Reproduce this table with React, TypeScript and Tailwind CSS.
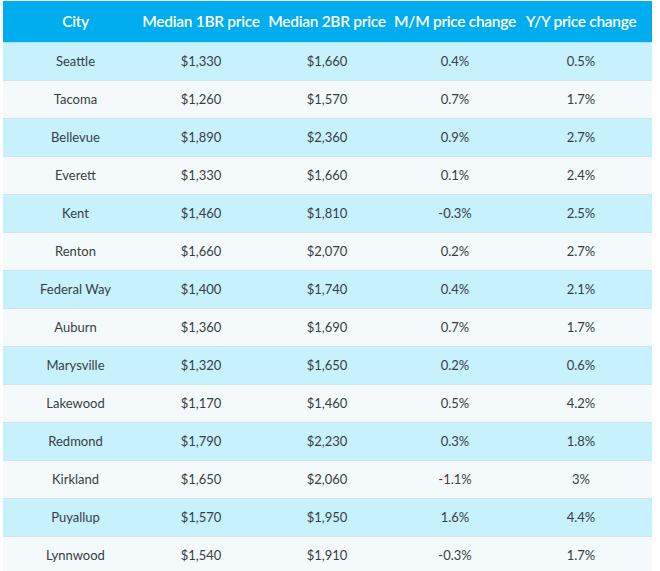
import React from "react";

const rows: [string, string, string, string, string][] = [
  ["Seattle", "$1,330", "$1,660", "0.4%", "0.5%"],
  ["Tacoma", "$1,260", "$1,570", "0.7%", "1.7%"],
  ["Bellevue", "$1,890", "$2,360", "0.9%", "2.7%"],
  ["Everett", "$1,330", "$1,660", "0.1%", "2.4%"],
  ["Kent", "$1,460", "$1,810", "-0.3%", "2.5%"],
  ["Renton", "$1,660", "$2,070", "0.2%", "2.7%"],
  ["Federal Way", "$1,400", "$1,740", "0.4%", "2.1%"],
  ["Auburn", "$1,360", "$1,690", "0.7%", "1.7%"],
  ["Marysville", "$1,320", "$1,650", "0.2%", "0.6%"],
  ["Lakewood", "$1,170", "$1,460", "0.5%", "4.2%"],
  ["Redmond", "$1,790", "$2,230", "0.3%", "1.8%"],
  ["Kirkland", "$1,650", "$2,060", "-1.1%", "3%"],
  ["Puyallup", "$1,570", "$1,950", "1.6%", "4.4%"],
  ["Lynnwood", "$1,540", "$1,910", "-0.3%", "1.7%"],
];

const headers = ["City", "Median 1BR price", "Median 2BR price", "M/M price change", "Y/Y price change"];

export default function App() {
  return (
    <div className="w-[660px] h-[571px] overflow-hidden bg-white pl-[3px] pt-[1px]" style={{ fontFamily: "Lato, 'Open Sans', sans-serif" }}>
      <div className="w-[649px]">
        <div className="grid grid-cols-[145px_106px_146px_110px_142px] h-[42px] bg-[#00adef] border-b border-[#b9dbe6] items-center">
          {headers.map((h) => (
            <div key={h} className="flex justify-center">
              <span className="whitespace-nowrap text-white text-[15.5px] font-semibold tracking-[-0.3px]">{h}</span>
            </div>
          ))}
        </div>
        {rows.map((r, i) => (
          <div
            key={r[0]}
            className={`grid grid-cols-[145px_106px_146px_110px_142px] h-[38px] items-center border-b border-[#cfe3e9] ${i % 2 === 0 ? "bg-[#c7f1fd]" : "bg-[#f4fafb]"}`}
          >
            {r.map((c, j) => (
              <div key={j} className="text-center text-[13px] text-[#363e41]">
                {c}
              </div>
            ))}
          </div>
        ))}
      </div>
    </div>
  );
}
